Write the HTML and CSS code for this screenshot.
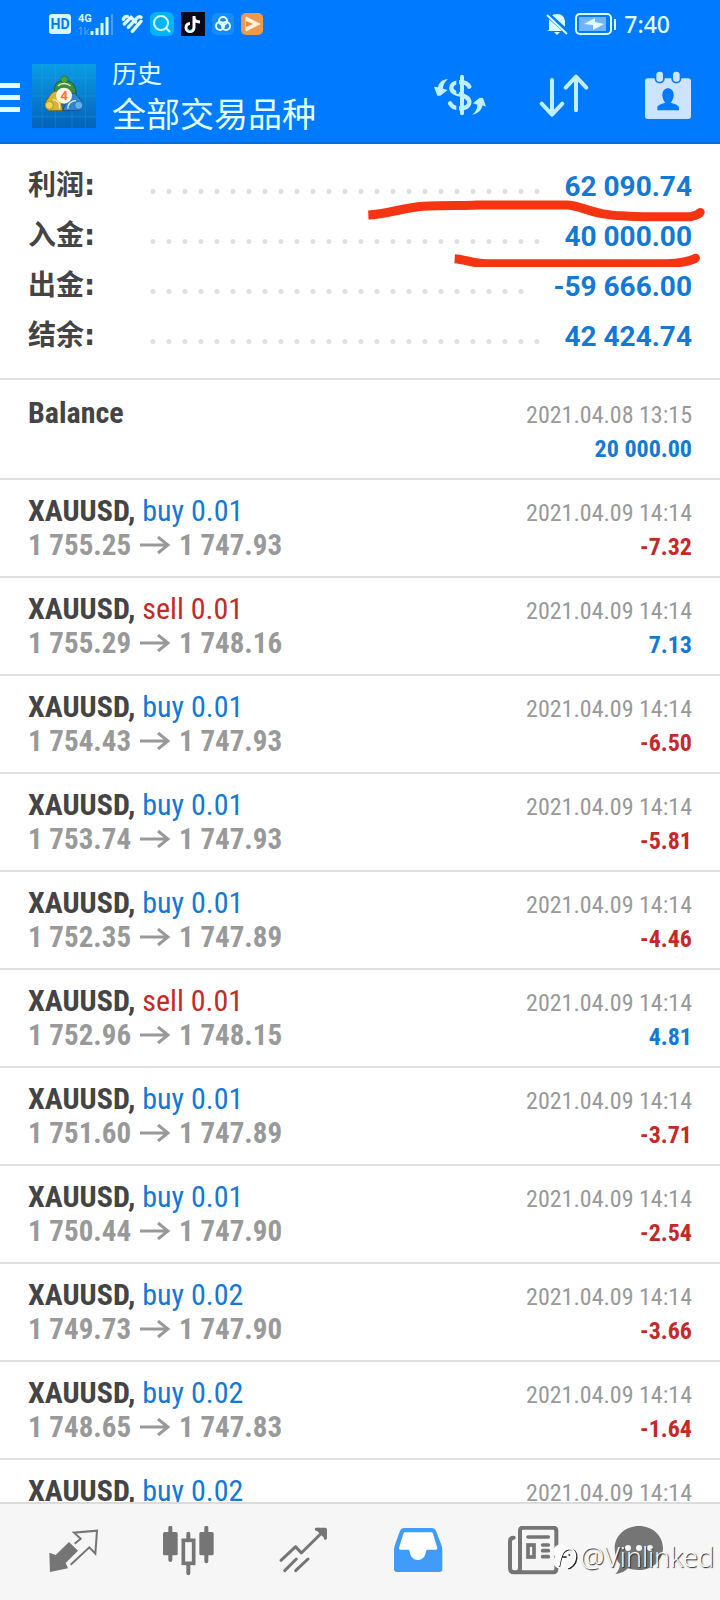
FILE: index.html
```html
<!DOCTYPE html>
<html lang="zh">
<head>
    <meta charset="UTF-8">
    <meta name="viewport" content="width=device-width, initial-scale=1.0">
    <title>历史</title>
    <link rel="stylesheet" href="styles.css">
</head>
<body>
    <svg class="defs" aria-hidden="true">
        <symbol id="arrow" viewBox="0 0 30 18">
            <path d="M0 9H28M18 1l10 8-10 8" fill="none" stroke="currentColor" stroke-width="3"/>
        </symbol>
    </svg>
    <header class="header">
        <!-- 状态栏 -->
        <div class="status">
            <div class="status-left">
                <span class="hd">HD</span>
                <svg class="signal" width="36" height="24" viewBox="0 0 36 24">
                    <text x="0" y="10" class="net">4G</text>
                    <path d="M3 15v8M1 17l2-2M7 15v8M11 17l-3 3 3 3" stroke="#5aa9ff" stroke-width="1" fill="none"/>
                    <path d="M14 23v-4M19 23v-7M24 23V11M29 23V5" stroke="#d9ffff" stroke-width="3"/>
                    <path d="M34 23V2" stroke="#4b9fff" stroke-width="2"/>
                </svg>
                <svg width="22" height="20" viewBox="0 0 66 60" fill="none" stroke="#d9ffff" stroke-width="10" stroke-linecap="round">
                    <path d="M7 16q2-9 12-9M10 30L30 10M22 40l24-26q8-9 14-4M34 52l26-30"/>
                    <path d="M30 10l14 14"/>
                </svg>
                <svg width="24" height="24" viewBox="0 0 24 24" fill="none">
                    <rect width="24" height="24" rx="6" fill="#00b4fc"/>
                    <circle cx="11" cy="11" r="7" stroke="#d9ffff" stroke-width="2"/>
                    <path d="M16 16l4 4" stroke="#d9ffff" stroke-width="2"/>
                </svg>
                <svg width="24" height="24" viewBox="0 0 24 24" fill="none">
                    <rect width="24" height="24" fill="#0c0b1c"/>
                    <path d="M13 4v11.500a4 4 0 1 1-4-4M13 5c0 3 2 5 6 5" stroke="#fff" stroke-width="3"/>
                    <path d="M11 18a4 4 0 0 1-5-1" stroke="#3be0e6" stroke-width="1"/>
                </svg>
                <svg width="22" height="22" viewBox="0 0 22 22" fill="none">
                    <rect width="22" height="22" rx="5" fill="#168bfa"/>
                    <g stroke="#e4ffff" stroke-width="2">
                        <circle cx="11" cy="8" r="4"/>
                        <circle cx="8" cy="13" r="4"/>
                        <circle cx="14" cy="13" r="4"/>
                    </g>
                </svg>
                <svg width="22" height="22" viewBox="0 0 22 22">
                    <rect width="22" height="22" rx="5" fill="#ee9a4b"/>
                    <path d="M5 4l14 7-14 7z" fill="#fff0dc" stroke="#fff0dc" stroke-linejoin="round"/>
                    <path d="M5 8l7 3-7 3z" fill="#e58a49"/>
                </svg>
            </div>
            <div class="status-right">
                <svg width="22" height="22" viewBox="0 0 22 22">
                    <path d="M3 17V9c0-5 3-8 8-8s8 3 8 8v5l2 4H1z" fill="#d9ffff"/>
                    <path d="M8 19h6l-3 3z" fill="#d9ffff"/>
                    <path d="M0 0l22 20" stroke="#007aff" stroke-width="5"/>
                    <path d="M1 2l20 19" stroke="#d9ffff" stroke-width="2"/>
                </svg>
                <svg width="42" height="22" viewBox="0 0 42 22">
                    <rect x="1" y="1" width="35" height="20" rx="4" fill="none" stroke="#d9ffff" stroke-width="2"/>
                    <rect x="4" y="4" width="27" height="14" fill="#70b6ff"/>
                    <path d="M9 11l11-6v4l9 2-11 6v-5z" fill="#e8ffff"/>
                    <path d="M40 6v11" stroke="#d9ffff" stroke-width="2"/>
                </svg>
                <time class="clock">7:40</time>
            </div>
        </div>
        <!-- 标题栏 -->
        <div class="bar">
            <button class="menu" aria-label="菜单"><i></i><i></i><i></i></button>
            <svg class="logo" viewBox="0 0 192 192">
                <defs>
                    <linearGradient id="bg" x1="0" y1="0" x2="0" y2="1">
                        <stop offset="0" stop-color="#0a9ce6"/>
                        <stop offset="1" stop-color="#0463b8"/>
                    </linearGradient>
                </defs>
                <rect width="192" height="192" fill="url(#bg)"/>
                <path d="M0 42h192M0 96h192M0 158h192M30 0v192M70 0v192M120 0v192M160 0v192" stroke="#3aa9e8" stroke-width="2" opacity=".4"/>
                <path d="M68 100c-4-38 4-50 28-50s38 12 36 50z" fill="#3c8f38" stroke="#1f5c2c" stroke-width="3"/>
                <path d="M92 140H52c-16-8-16-24-4-36 10-18 20-26 34-22z" fill="#d8b430" stroke="#77671c" stroke-width="3"/>
                <path d="M92 140h46c16-6 16-24 4-38-10-14-20-18-30-12z" fill="#2f86cf" stroke="#164f8c" stroke-width="3"/>
                <circle cx="97" cy="47" r="11" fill="#46a53f" stroke="#236b2d" stroke-width="2"/>
                <circle cx="52" cy="124" r="12" fill="#efd45a" stroke="#8a7522" stroke-width="2"/>
                <circle cx="140" cy="124" r="12" fill="#5db3ec" stroke="#1c5d9d" stroke-width="2"/>
                <path d="M62 108c12-2 24 10 20 26M132 110c-12 0-26 8-24 24M78 66c10-10 26-10 38 0" fill="none" stroke="#d8f0d0" stroke-width="4"/>
                <circle cx="96" cy="95" r="24" fill="#fff5e8"/>
                <text x="96" y="109" class="logo-num">4</text>
            </svg>
            <div class="titles">
                <p class="sub">历史</p>
                <h1 class="title">全部交易品种</h1>
            </div>
            <div class="actions">
                <button aria-label="货币">
                    <svg viewBox="222 210 156 156" fill="none" stroke="#c0f0ff" stroke-linecap="round">
                        <path d="M328 260c-10-20-54-18-54 4 0 24 54 16 54 42 0 24-46 26-58 4" stroke-width="13"/>
                        <path d="M293 236v45M293 303v33" stroke="#007aff" stroke-width="8" stroke-linecap="butt"/>
                        <path d="M306 230v110" stroke-width="12"/>
                        <path d="M264 237c-18 2-27 10-30 25l-12-2 10 27h9l22-17-14-4c0-11 5-20 15-29zM336 345c18-4 28-14 32-29l10 4-9-26-10-1-20 17 13 4c0 12-5 22-16 31z" fill="#c0f0ff" stroke="none"/>
                    </svg>
                </button>
                <button aria-label="排序">
                    <svg viewBox="534 210 156 156" fill="none" stroke="#c0f0ff" stroke-width="12" stroke-linecap="round" stroke-linejoin="round">
                        <path d="M576 240v103M545 311l31 33 31-33M648 331V230M617 263l31-33 31 33"/>
                    </svg>
                </button>
                <button aria-label="日期">
                    <svg viewBox="846 210 156 156">
                        <rect x="855" y="235" width="138" height="122" rx="9" fill="#cce4ff"/>
                        <rect x="884" y="212" width="30" height="38" rx="14" fill="#007aff"/>
                        <rect x="934" y="212" width="30" height="38" rx="14" fill="#007aff"/>
                        <rect x="889" y="215" width="20" height="30" rx="9" fill="#cce4ff"/>
                        <rect x="939" y="215" width="20" height="30" rx="9" fill="#cce4ff"/>
                        <path d="M892 331v-10c3-8 16-10 24-13-5-6-9-14-9-24 0-26 34-26 34 0 0 10-4 18-9 24 8 3 21 5 25 13v10z" fill="#007aff"/>
                    </svg>
                </button>
            </div>
        </div>
    </header>

    <main class="main">
        <section class="summary">
            <dl>
                <div class="sum-row"><dt>利润:</dt><dd>62 090.74</dd></div>
                <div class="sum-row"><dt>入金:</dt><dd>40 000.00</dd></div>
                <div class="sum-row"><dt>出金:</dt><dd>-59 666.00</dd></div>
                <div class="sum-row"><dt>结余:</dt><dd>42 424.74</dd></div>
            </dl>
            <!-- 手绘红线 -->
            <svg class="marks" width="360" height="80" viewBox="0 0 1080 240" fill="none" stroke="#f53512" stroke-width="27" stroke-linejoin="round">
                <path d="M25 84C80 82 130 62 190 58C260 53 310 57 350 54H620C665 55 700 87 800 87C840 91 920 89 990 89Q1008 88 1021 77"/>
                <path d="M284 215C315 217 340 230 380 230H920Q975 228 1007 214"/>
                <circle cx="1021" cy="76" r="13" fill="#f53512" stroke="none"/>
                <circle cx="1007" cy="213" r="13" fill="#f53512" stroke="none"/>
            </svg>
        </section>

        <ul class="list">
            <li>
                <div class="deal"><b>Balance</b></div>
                <div class="info"><time>2021.04.08 13:15</time><b class="plus">20 000.00</b></div>
            </li>
            <li>
                <div class="deal"><b>XAUUSD,</b> <span class="buy">buy 0.01</span><p class="price">1 755.25 <svg><use href="#arrow"/></svg> 1 747.93</p></div>
                <div class="info"><time>2021.04.09 14:14</time><b class="minus">-7.32</b></div>
            </li>
            <li>
                <div class="deal"><b>XAUUSD,</b> <span class="sell">sell 0.01</span><p class="price">1 755.29 <svg><use href="#arrow"/></svg> 1 748.16</p></div>
                <div class="info"><time>2021.04.09 14:14</time><b class="plus">7.13</b></div>
            </li>
            <li>
                <div class="deal"><b>XAUUSD,</b> <span class="buy">buy 0.01</span><p class="price">1 754.43 <svg><use href="#arrow"/></svg> 1 747.93</p></div>
                <div class="info"><time>2021.04.09 14:14</time><b class="minus">-6.50</b></div>
            </li>
            <li>
                <div class="deal"><b>XAUUSD,</b> <span class="buy">buy 0.01</span><p class="price">1 753.74 <svg><use href="#arrow"/></svg> 1 747.93</p></div>
                <div class="info"><time>2021.04.09 14:14</time><b class="minus">-5.81</b></div>
            </li>
            <li>
                <div class="deal"><b>XAUUSD,</b> <span class="buy">buy 0.01</span><p class="price">1 752.35 <svg><use href="#arrow"/></svg> 1 747.89</p></div>
                <div class="info"><time>2021.04.09 14:14</time><b class="minus">-4.46</b></div>
            </li>
            <li>
                <div class="deal"><b>XAUUSD,</b> <span class="sell">sell 0.01</span><p class="price">1 752.96 <svg><use href="#arrow"/></svg> 1 748.15</p></div>
                <div class="info"><time>2021.04.09 14:14</time><b class="plus">4.81</b></div>
            </li>
            <li>
                <div class="deal"><b>XAUUSD,</b> <span class="buy">buy 0.01</span><p class="price">1 751.60 <svg><use href="#arrow"/></svg> 1 747.89</p></div>
                <div class="info"><time>2021.04.09 14:14</time><b class="minus">-3.71</b></div>
            </li>
            <li>
                <div class="deal"><b>XAUUSD,</b> <span class="buy">buy 0.01</span><p class="price">1 750.44 <svg><use href="#arrow"/></svg> 1 747.90</p></div>
                <div class="info"><time>2021.04.09 14:14</time><b class="minus">-2.54</b></div>
            </li>
            <li>
                <div class="deal"><b>XAUUSD,</b> <span class="buy">buy 0.02</span><p class="price">1 749.73 <svg><use href="#arrow"/></svg> 1 747.90</p></div>
                <div class="info"><time>2021.04.09 14:14</time><b class="minus">-3.66</b></div>
            </li>
            <li>
                <div class="deal"><b>XAUUSD,</b> <span class="buy">buy 0.02</span><p class="price">1 748.65 <svg><use href="#arrow"/></svg> 1 747.83</p></div>
                <div class="info"><time>2021.04.09 14:14</time><b class="minus">-1.64</b></div>
            </li>
            <li>
                <div class="deal"><b>XAUUSD,</b> <span class="buy">buy 0.02</span></div>
                <div class="info"><time>2021.04.09 14:14</time></div>
            </li>
        </ul>
    </main>

    <!-- 底部导航 -->
    <nav class="tabs">
        <a href="#" aria-label="行情">
            <svg viewBox="141 258 156 156">
                <path d="M207 306l27 26-37 37 7 16-54 11-2-58 19 7z" fill="#757575"/>
                <path d="M212 374l56-52 18 19 5-69-69 6 20 18-18 15" fill="none" stroke="#757575" stroke-width="6"/>
            </svg>
        </a>
        <a href="#" aria-label="图表">
            <svg viewBox="486 258 156 156">
                <path d="M511 263v97M565 281v119M619 263v101" stroke="#757575" stroke-width="12" stroke-linecap="round"/>
                <rect x="489" y="276" width="44" height="70" rx="5" fill="#757575"/>
                <rect x="598" y="276" width="43" height="70" rx="5" fill="#757575"/>
                <rect x="550" y="301" width="31" height="69" fill="#f6f6f6" stroke="#757575" stroke-width="11"/>
            </svg>
        </a>
        <a href="#" aria-label="交易">
            <svg viewBox="831 258 156 156" fill="none" stroke="#757575" stroke-width="9" stroke-linecap="round" stroke-linejoin="round">
                <path d="M843 361l44-41 17 19 70-69M949 268l27 1v26M854 392l35-35M887 392l37-35"/>
                <path d="M953 268h23v23z" fill="#757575"/>
            </svg>
        </a>
        <a href="#" aria-label="历史">
            <svg viewBox="97 258 156 156">
                <path d="M132 264h85q8 0 12 8l16 42q3 8 3 14v59q0 9-9 9H112q-9 0-9-9v-59q0-6 3-14l15-42q3-8 11-8z" fill="#419bfa"/>
                <path d="M135 277h80q4 0 5 4l13 43q1 5-4 5h-26q-3 0-4 5c-2 35-47 35-49 0q-1-5-4-5h-24q-5 0-4-5l13-43q1-4 4-4z" fill="#fff"/>
            </svg>
        </a>
        <a href="#" aria-label="新闻">
            <svg viewBox="442 258 156 156" fill="none" stroke="#757575" stroke-linecap="round">
                <path d="M462 293q-11 0-11 11v81q0 12 12 12h117q10 0 10-10V273q0-10-10-10h-90q-9 0-9 10v112q0 12-12 12" stroke-width="12"/>
                <path d="M505 291h61M549 315h17M549 332h17M549 350h17" stroke-width="11"/>
                <rect x="505" y="315" width="18" height="36" stroke-width="11"/>
            </svg>
        </a>
        <a href="#" aria-label="消息">
            <svg viewBox="759 258 156 156">
                <path d="M837 258c39 0 72 28 72 66 0 42-36 66-73 66-11 0-22-2-32-5-8 9-21 16-38 17 9-8 13-18 14-29-11-13-16-29-16-49 0-38 34-66 73-66z" fill="#757575"/>
                <circle cx="804" cy="324" r="9" fill="#f6f6f6"/>
                <circle cx="837" cy="324" r="9" fill="#f6f6f6"/>
                <circle cx="870" cy="324" r="9" fill="#f6f6f6"/>
            </svg>
        </a>
        <div class="mark">
            <svg width="26" height="28" viewBox="0 0 78 84">
                <circle cx="20" cy="26" r="22" fill="#fff"/>
                <circle cx="18" cy="56" r="20" fill="#fff"/>
                <path d="M16 72q6-34 14-44c14-16 40-10 38 18-2 18-16 30-26 30M20 42h18M46 34v4" fill="none" stroke="#222" stroke-width="5"/>
                <path d="M14 70q6-34 14-44c14-16 38-10 36 18-2 18-16 30-26 30" fill="none" stroke="#fff" stroke-width="5"/>
            </svg>
            <span>@Vinlinked</span>
        </div>
    </nav>
</body>
</html>
```
FILE: styles.css
```css
*{
    margin: 0;
    padding: 0;
    box-sizing: border-box;
}
body{
    display: flex;
    flex-direction: column;
    height: 100vh;
    overflow: hidden;
    background-color: #fff;
    font-family: Roboto, "Noto Sans CJK SC", sans-serif;
    color: #444;
}
ul{
    list-style: none;
}
button{
    border: none;
    background: none;
}
svg{
    display: block;
    flex: none;
}
.defs{
    position: absolute;
    width: 0;
    height: 0;
}

/* 头部 */
.header{
    flex: none;
    background-color: #007aff;
    box-shadow: inset 0 -2px #0a6cd6;
    color: #e0ffff;
}
.status{
    display: flex;
    justify-content: space-between;
    align-items: center;
    height: 48px;
    padding: 0 50px 0 49px;
}
.status-left,
.status-right{
    display: flex;
    align-items: center;
    gap: 7px;
}
.hd{
    width: 22px;
    border-radius: 3px;
    background-color: #d9f6ff;
    color: #007aff;
    font-size: 14px;
    font-weight: bold;
    line-height: 20px;
    text-align: center;
}
.net{
    fill: #d9ffff;
    font-size: 11px;
    font-weight: bold;
}
.clock{
    font-family: "Noto Sans", sans-serif;
    font-size: 23px;
    font-weight: 500;
    line-height: 28px;
}
.bar{
    display: flex;
    align-items: center;
    height: 96px;
    padding-right: 26px;
}
.menu{
    display: flex;
    flex-direction: column;
    gap: 7px;
    width: 20px;
    margin-right: 12px;
    padding-top: 2px;
}
.menu i{
    height: 5px;
    background-color: #e0ffff;
}
.logo{
    width: 64px;
    height: 64px;
}
.logo-num{
    fill: #f07a3c;
    font-size: 40px;
    font-weight: bold;
    text-anchor: middle;
}
.titles{
    flex: 1;
    padding: 0 0 2px 16px;
    font-family: "Noto Sans CJK SC", sans-serif;
}
.sub{
    font-size: 25px;
    line-height: 36px;
}
.title{
    font-size: 34px;
    font-weight: normal;
    line-height: 46px;
}
.actions{
    display: flex;
    gap: 52px;
}
.actions svg,
.tabs a svg{
    width: 52px;
    height: 52px;
}

/* 汇总 */
.main{
    flex: 1;
    min-height: 0;
    overflow: hidden;
}
.summary{
    position: relative;
    padding: 17px 28px;
    border-bottom: 2px solid #e0e0e0;
}
.sum-row{
    display: flex;
    align-items: center;
    height: 50px;
    font-size: 28px;
    font-weight: bold;
}
.sum-row dt{
    width: 117px;
    font-family: "DejaVu Sans", "Noto Sans CJK SC", sans-serif;
    line-height: 34px;
}
.sum-row dd{
    order: 2;
    color: #1279d6;
}
.sum-row::before{
    content: "";
    flex: 1;
    order: 1;
    height: 5px;
    margin: 10px 20px 0 0;
    background: radial-gradient(circle, #e0e0e0 2px, transparent 3px) 0 0 / 16px 5px repeat-x;
}
.marks{
    position: absolute;
    right: 0;
    top: 43px;
}

/* 历史列表 */
.list{
    font-family: "Roboto Condensed", "Liberation Sans Narrow", Roboto, sans-serif;
}
.list li{
    display: flex;
    justify-content: space-between;
    height: 98px;
    padding: 14px 28px 0;
    border-bottom: 2px solid #e0e0e0;
}
.list li:first-child{
    height: 100px;
    padding-top: 16px;
}
.deal{
    font-size: 30px;
    line-height: 34px;
}
.price{
    display: flex;
    align-items: center;
    gap: 9px;
    color: #999;
    font-size: 29px;
    font-weight: bold;
}
.price svg{
    width: 30px;
    height: 18px;
}
.info{
    display: flex;
    flex-direction: column;
    padding-top: 2px;
    font-size: 24px;
    line-height: 34px;
    text-align: right;
    color: #999;
}
.buy,
.plus{
    color: #1279d6;
}
.sell,
.minus{
    color: #c62828;
}

/* 底部 */
.tabs{
    position: relative;
    display: grid;
    grid-template-columns: repeat(5, 115fr) 98fr;
    align-items: center;
    justify-items: center;
    flex: none;
    height: 98px;
    padding: 0 32px 0 15px;
    border-top: 2px solid #dcdcdc;
    background-color: #f6f6f6;
}
.mark{
    position: absolute;
    right: 6px;
    top: 38px;
    display: flex;
    align-items: center;
    color: #fff;
    font-family: "Open Sans", sans-serif;
    font-size: 27px;
    font-weight: 300;
    line-height: 30px;
    text-shadow: 1px 1px 1px #222;
}
```
